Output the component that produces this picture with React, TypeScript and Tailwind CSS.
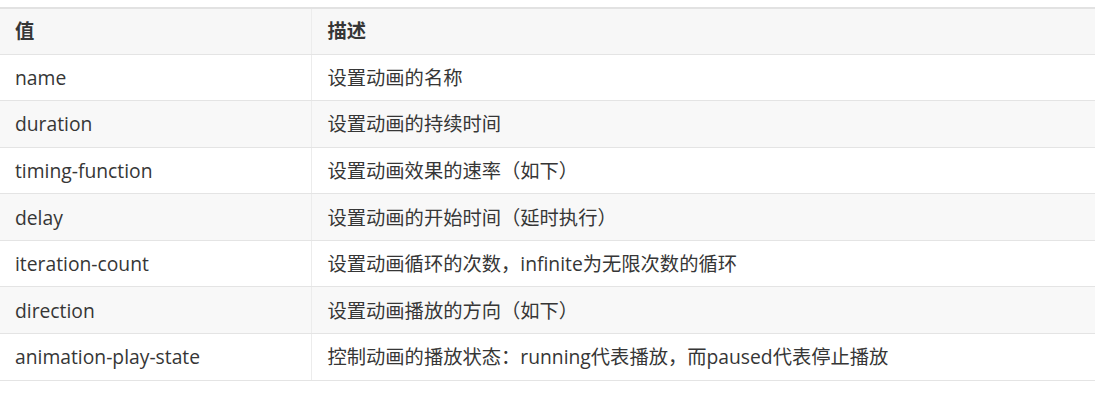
const rows: [string, string][] = [
  ['name', '设置动画的名称'],
  ['duration', '设置动画的持续时间'],
  ['timing-function', '设置动画效果的速率（如下）'],
  ['delay', '设置动画的开始时间（延时执行）'],
  ['iteration-count', '设置动画循环的次数，infinite为无限次数的循环'],
  ['direction', '设置动画播放的方向（如下）'],
  ['animation-play-state', '控制动画的播放状态：running代表播放，而paused代表停止播放'],
];

export default function App() {
  return (
    <div
      className="w-[1095px] h-[401px] bg-white pt-[7px] text-[19.3px] text-[#363636]"
      style={{ fontFamily: '"Open Sans", "Noto Sans CJK SC", sans-serif' }}
    >
      <table className="w-full border-collapse border-t-2 border-[#e2e2e2]">
        <thead>
          <tr className="bg-[#f7f7f7] h-[46px]">
            <th className="w-[311px] text-left font-bold pl-[15px] border-r border-[#ececec] border-b border-b-[#e4e4e4]">值</th>
            <th className="text-left font-bold pl-[16px] border-b border-b-[#e4e4e4]">描述</th>
          </tr>
        </thead>
        <tbody>
          {rows.map(([k, v], i) => (
            <tr key={k} className={`h-[46.6px] ${i % 2 === 1 ? 'bg-[#f8f8f8]' : 'bg-white'}`}>
              <td className="pl-[15px] pt-[2px] border-r border-[#ececec] border-b border-b-[#e4e4e4]">{k}</td>
              <td className="pl-[16px] pt-[2px] border-b border-b-[#e4e4e4]">{v}</td>
            </tr>
          ))}
        </tbody>
      </table>
    </div>
  );
}
